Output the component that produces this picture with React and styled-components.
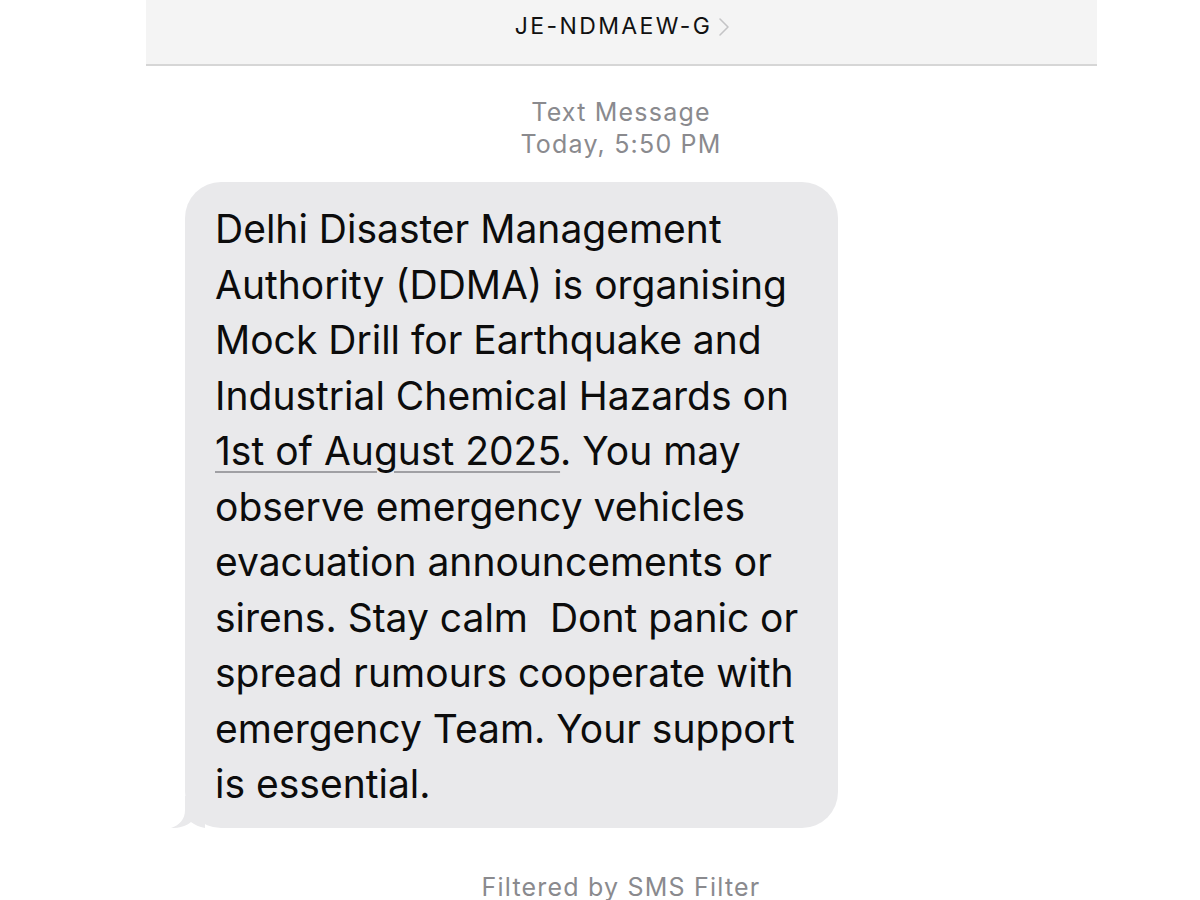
import React from "react";
import styled, { createGlobalStyle } from "styled-components";

const GlobalStyle = createGlobalStyle`
  html, body {
    margin: 0;
    padding: 0;
    background: #fff;
  }
  body {
    font-family: Inter, "Liberation Sans", Arial, sans-serif;
    -webkit-font-smoothing: antialiased;
  }
`;

const lines = [
  "Delhi Disaster Management",
  "Authority (DDMA) is organising",
  "Mock Drill for Earthquake and",
  "Industrial Chemical Hazards on",
  null, // the line with the link
  "observe emergency vehicles",
  "evacuation announcements or",
  "sirens. Stay calm  Dont panic or",
  "spread rumours cooperate with",
  "emergency Team. Your support",
  "is essential.",
];

export default function App() {
  return (
    <Page>
      <GlobalStyle />
      <HeaderBar>
        <Sender>
          JE-NDMAEW-G
          <svg width="12" height="20" viewBox="0 0 12 20">
            <polyline
              points="2,2 10,10 2,18"
              fill="none"
              stroke="#c4c4c6"
              strokeWidth="1.6"
              strokeLinecap="round"
              strokeLinejoin="round"
            />
          </svg>
        </Sender>
      </HeaderBar>

      <Stamp>
        <div>Text Message</div>
        <div>Today, 5:50 PM</div>
      </Stamp>

      <Thread>
        <Bubble>
          {lines.map((l, i) =>
            l === null ? (
              <Line key={i}>
                <DateLink>1st of August 2025</DateLink>. You may
              </Line>
            ) : (
              <Line key={i}>{l}</Line>
            )
          )}
          <Tail width="34" height="32" viewBox="0 0 34 32">
            <path
              d="M14 0 L14 14 C14 23 9 29 0 32 C9 32 15 30 20 26 C24 29 28 31 34 32 L34 0 Z"
              fill="#e9e9eb"
            />
          </Tail>
        </Bubble>
      </Thread>

      <Footer>Filtered by SMS Filter</Footer>
    </Page>
  );
}

const Page = styled.div`
  width: 1200px;
  height: 900px;
  overflow: hidden;
  display: flex;
  flex-direction: column;
`;

const HeaderBar = styled.div`
  margin: 0 103px 0 146px;
  height: 64px;
  flex: none;
  background: #f4f4f4;
  border-bottom: 2px solid #d6d6d6;
  display: flex;
  align-items: center;
  justify-content: center;
  padding-left: 2px;
`;

const Sender = styled.div`
  display: flex;
  align-items: center;
  gap: 6px;
  font-size: 23px;
  letter-spacing: 2.4px;
  color: #111;
  margin-top: -12px;

  svg {
    margin-top: 1px;
  }
`;

const Stamp = styled.div`
  margin-top: 30px;
  text-align: center;
  padding-left: 42px;
  font-size: 25px;
  letter-spacing: 1.2px;
  line-height: 32px;
  color: #8a8a8e;
`;

const Thread = styled.div`
  margin-top: 22px;
  padding-left: 185px;
  display: flex;
`;

const Bubble = styled.div`
  position: relative;
  width: 653px;
  box-sizing: border-box;
  padding: 19px 0 16px 30px;
  background: #e9e9eb;
  border-radius: 36px;
  font-size: 39px;
  line-height: 55.5px;
  color: #0c0c0c;
`;

const Line = styled.div`
  white-space: pre;
`;

const DateLink = styled.span`
  text-decoration: underline;
  text-decoration-color: #a0a0a4;
  text-decoration-thickness: 1.5px;
  text-underline-offset: 6px;
`;

const Tail = styled.svg`
  position: absolute;
  left: -14px;
  bottom: 0;
`;

const Footer = styled.div`
  margin-top: 46px;
  text-align: center;
  padding-left: 42px;
  font-size: 25px;
  line-height: 26px;
  letter-spacing: 1.2px;
  color: #8a8a8e;
`;
